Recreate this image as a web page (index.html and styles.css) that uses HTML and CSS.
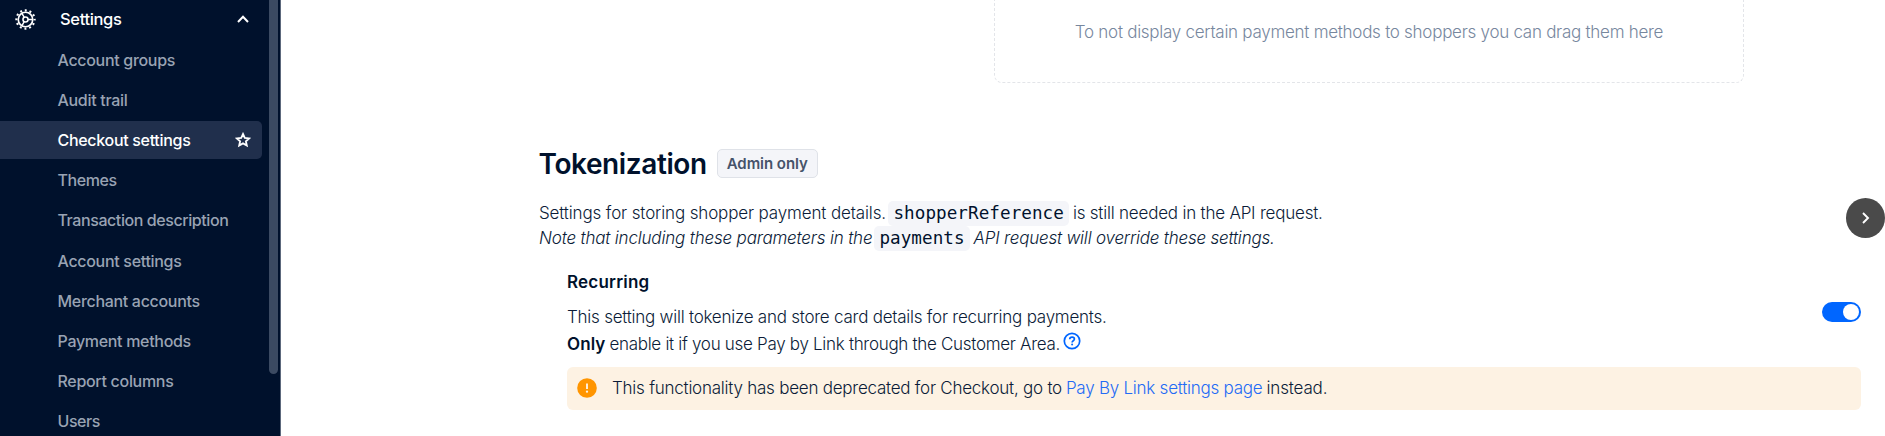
FILE: index.html
```
<!DOCTYPE html>
<html lang="en">
<head>
<meta charset="utf-8">
<title>Checkout settings</title>
<link rel="stylesheet" href="styles.css">
</head>
<body>
<div class="app">
  <nav class="sidebar">
    <div class="menu">
      <div class="group">
        <svg class="gear" viewBox="0 0 20 20" fill="none" stroke="#fff"><circle cx="10" cy="10" r="6.9" stroke-width="1.6"/><circle cx="10" cy="10" r="8.7" stroke-width="2" stroke-dasharray="1.9 2.655" stroke-dashoffset="0.95"/><circle cx="10" cy="10" r="2.4" stroke-width="1.5"/><path d="M12.4 10h4.3M8.8 7.9 6.6 4.2M8.8 12.1l-2.2 3.7" stroke-width="1.4"/></svg>
        <span class="t group-name">Settings</span>
        <svg class="chevron" viewBox="0 0 12 8" fill="none" stroke="#fff" stroke-width="2"><path d="M1 7l5-5.2L11 7"/></svg>
      </div>
      <a class="item"><span class="t">Account groups</span></a>
      <a class="item"><span class="t">Audit trail</span></a>
      <a class="item active"><span class="t">Checkout settings</span>
        <svg class="star" viewBox="0 0 16 16" fill="none" stroke="#fff" stroke-width="1.8"><path d="M8 2l1.8 3.9 4.3.5-3.2 2.9.9 4.2L8 11.4l-3.8 2.1.9-4.2L1.9 6.4l4.3-.5z"/></svg></a>
      <a class="item"><span class="t tight">Themes</span></a>
      <a class="item"><span class="t tight">Transaction description</span></a>
      <a class="item"><span class="t">Account settings</span></a>
      <a class="item"><span class="t">Merchant accounts</span></a>
      <a class="item"><span class="t">Payment methods</span></a>
      <a class="item"><span class="t">Report columns</span></a>
      <a class="item"><span class="t tight">Users</span></a>
    </div>
    <div class="scroll"></div>
  </nav>
  <main class="content">
    <div class="dropzone"><span class="t drop-text">To not display certain payment methods to shoppers you can drag them here</span></div>
    <header class="heading"><h2 class="t title">Tokenization</h2><span class="badge"><span class="t">Admin only</span></span></header>
    <p class="intro"><span class="t intro-start">Settings for storing shopper payment details.</span><code>shopperReference</code><span class="t intro-end">is still needed in the API request.</span></p>
    <p class="intro note"><span class="t note-start">Note that including these parameters in the</span><code>payments</code><span class="t intro-end">API request will override these settings.</span></p>
    <section class="setting">
      <h3 class="name">Recurring</h3>
      <div class="row">
        <div class="desc">
          <p class="line"><span class="t">This setting will tokenize and store card details for recurring payments.</span></p>
          <p class="line"><strong class="t">Only</strong><span class="t usage">enable it if you use Pay by Link through the Customer Area.</span><svg class="help" viewBox="0 0 18 18" fill="none" stroke="#0066ff"><circle cx="9" cy="9" r="7.7" stroke-width="1.7"/><path d="M6.7 7.2c.1-1.4 1.1-2.1 2.4-2.1 1.3 0 2.3.8 2.3 2 0 1.7-2.3 1.7-2.3 3.4" stroke-width="1.7"/><circle cx="9.1" cy="12.5" r="1" fill="#0066ff" stroke="none"/></svg></p>
        </div>
        <span class="toggle"><span class="knob"></span></span>
      </div>
      <div class="alert"><svg class="warn" viewBox="0 0 20 20"><circle cx="10" cy="10" r="9.8" fill="#ff9500"/><path d="M10 5.5v5.4" stroke="#fdf2e3" stroke-width="1.9"/><circle cx="10" cy="13.7" r="1.15" fill="#fdf2e3"/></svg><span class="t">This functionality has been deprecated for Checkout, go to</span><a class="t link">Pay By Link settings page</a><span class="t alert-end">instead.</span></div>
    </section>
  </main>
  <button class="next" aria-label="Next"><svg viewBox="0 0 8 12" fill="none" stroke="#fff" stroke-width="1.9"><path d="M1 1l5 5-5 5"/></svg></button>
</div>
</body>
</html>
```
FILE: styles.css
```
* { box-sizing: border-box; }
body { margin: 0; width: 1885px; height: 436px; overflow: hidden; background: #fff; font-family: Inter, sans-serif; font-size: 17px; color: #00112c; }
p, h2, h3 { margin: 0; }
.t { white-space: nowrap; }
.app { display: flex; height: 436px; position: relative; }
.sidebar { display: flex; width: 281px; height: 436px; background: #00112c; border-right: 1px solid #5c687c; overflow: hidden; }
.menu { width: 262px; flex: none; color: #99a3b3; font-size: 16px; font-weight: 500; letter-spacing: -0.31px; }
.group { display: flex; align-items: center; height: 38.4px; padding-left: 15px; color: #fff; }
.gear { width: 21px; height: 21px; }
.group-name { margin-left: 24px; font-size: 16.5px; letter-spacing: -0.36px; }
.chevron { width: 12px; height: 8px; margin-left: auto; margin-right: 13px; }
.item { display: flex; align-items: center; height: 38px; margin-top: 2.2px; padding-left: 57.5px; border-radius: 0 5px 5px 0; }
.tight { letter-spacing: -0.42px; }
.active { background: #202f4c; color: #fff; }
.star { width: 16px; height: 16px; margin-left: auto; margin-right: 11px; }
.scroll { width: 9px; height: 374px; margin-left: 7px; background: #3b4a62; border-radius: 0 0 5px 5px; }
.content { flex: 1; padding-left: 258px; font-weight: 300; color: #0b1c38; letter-spacing: -0.24px; }
.dropzone { display: flex; justify-content: center; width: 750px; height: 83px; margin-left: 455px; padding-top: 22px; border: 1px dashed #e3e5e9; border-top: 0; border-radius: 0 0 8px 8px; color: #77879e; line-height: 21px; }
.drop-text { letter-spacing: -0.27px; }
.heading { display: flex; align-items: center; height: 30px; margin-top: 65.5px; }
.title { font-size: 28px; font-weight: 600; letter-spacing: -0.4px; margin-left: -0.5px; color: #00112c; }
.badge { display: flex; align-items: center; height: 29px; padding: 0 9px; margin-left: 10px; margin-top: -1px; border: 1px solid #dfe2e8; border-radius: 5px; background: #f4f5f9; color: #46536a; font-size: 15px; font-weight: 600; letter-spacing: -0.05px; }
.intro { display: flex; align-items: center; height: 25px; }
.heading + .intro { margin-top: 22px; }
.note .t { font-style: italic; }
.intro-start { letter-spacing: -0.14px; margin-right: 2.5px; }
.note-start { letter-spacing: -0.18px; margin-right: 2px; }
.intro-end { letter-spacing: -0.21px; margin-left: 4px; }
code { font-family: "DejaVu Sans Mono", monospace; font-size: 17.6px; line-height: 25px; padding: 0 5px; background: #f4f5f9; border-radius: 5px; font-weight: 400; letter-spacing: 0.06px; color: #00112c; }
.setting { padding-left: 28px; margin-top: 18.5px; }
.name { font-size: 17px; font-weight: 600; line-height: 26px; letter-spacing: 0.2px; color: #00112c; }
.row { display: flex; justify-content: space-between; width: 1294px; margin-top: 8px; }
.line { display: flex; align-items: center; height: 27.3px; }
.line strong { font-weight: 600; letter-spacing: 0.1px; margin-right: 4px; color: #00112c; }
.usage { letter-spacing: -0.3px; }
.help { width: 18px; height: 18px; margin: -6px 0 0 3px; }
.toggle { display: flex; justify-content: flex-end; align-items: center; width: 39px; height: 20px; margin-top: -1px; padding-right: 2px; border-radius: 10px; background: #0066ff; }
.knob { width: 16px; height: 16px; border-radius: 50%; background: #fff; }
.alert { display: flex; align-items: center; width: 1294px; height: 43px; margin-top: 9px; padding-left: 10px; border-radius: 6px; background: #fdf2e3; }
.warn { width: 20px; height: 20px; margin-right: 15px; }
.link { color: #246bf5; margin: 0 4px; letter-spacing: -0.24px; }
.alert-end { letter-spacing: -0.15px; }
.next { position: absolute; right: 0; top: 198px; width: 39px; height: 40px; display: flex; align-items: center; justify-content: center; padding: 0; border: 0; border-radius: 50%; background: #4a4a4a; }
.next svg { width: 8px; height: 12px; }
```
